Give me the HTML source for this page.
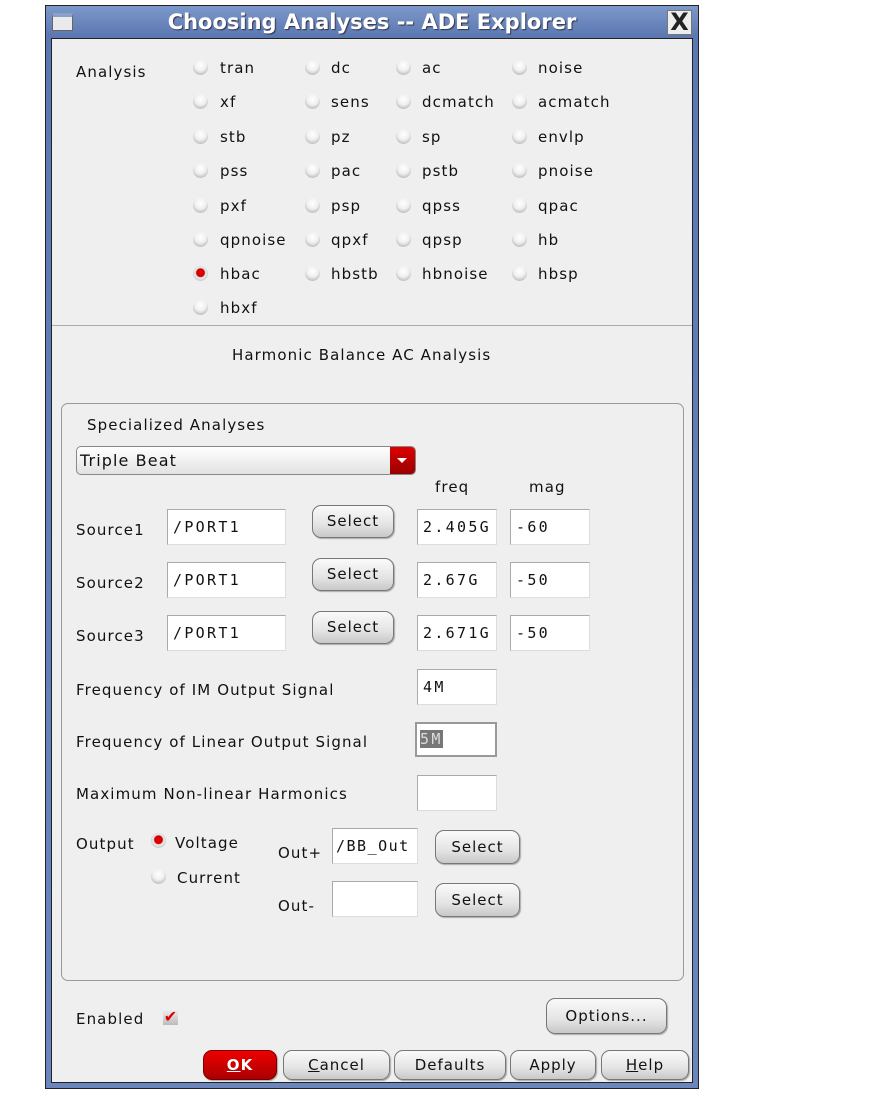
<!DOCTYPE html>
<html><head><meta charset="utf-8"><style>
*{margin:0;padding:0;box-sizing:border-box}
body{width:871px;height:1095px;background:#fff;position:relative;overflow:hidden;font-family:"DejaVu Sans","Liberation Sans",sans-serif;font-size:15px;color:#111}
.a{position:absolute;white-space:nowrap;line-height:18px;letter-spacing:1.1px}
.win{position:absolute;left:45px;top:5px;width:654px;height:1084px;background:linear-gradient(#7d98c9,#5b78b2 30px,#6a86bd);border:1px solid #222}
.title{position:absolute;left:0;top:0;width:652px;height:33px;color:#fff;font-weight:bold;font-size:21px;text-align:center;line-height:32px;text-shadow:1px 1px 1px #334}
.panel{position:absolute;left:51px;top:38px;width:642px;height:1045px;background:#efefef;border:1px solid #222}
.r{position:absolute;width:15px;height:15px;border-radius:50%;background:radial-gradient(circle at 50% 35%,#fff 0,#f0f0f0 45%,#bbb 80%,#999 100%)}
.r.on{background:radial-gradient(circle at 50% 45%,#e00 0,#c00 35%,#eee 45%,#bbb 85%,#999 100%)}
.tb{position:absolute;background:#fff;border:1px solid #aaa;border-right-color:#ddd;border-bottom-color:#ddd;font-family:"DejaVu Sans Mono","Liberation Mono",monospace;font-size:15px;letter-spacing:2.3px;line-height:34px;padding-left:5px;white-space:nowrap;overflow:hidden}
.btn{position:absolute;border:1px solid #777;border-radius:9px;background:linear-gradient(#fafafa,#e4e4e4 60%,#c8c8c8);text-align:center;box-shadow:1px 1px 1px #aaa;letter-spacing:1px}
</style></head><body>
<div class="win">
<div class="title">Choosing Analyses -- ADE Explorer</div>
<div style="position:absolute;left:6px;top:7px;width:21px;height:18px;background:#eaeaea;border:1px solid #666;border-top:4px solid #8aa0c8"></div>
<div style="position:absolute;left:621px;top:4px;width:25px;height:25px;background:#ededed;border:1px solid #777;font:bold 24px 'DejaVu Sans',sans-serif;line-height:23px;text-align:center;color:#222">X</div>
</div>
<div class="panel"></div>

<div class="a" style="left:76px;top:63px">Analysis</div>
<div class="r" style="left:193px;top:60px"></div><div class="a" style="left:220px;top:59px">tran</div>
<div class="r" style="left:305px;top:60px"></div><div class="a" style="left:331px;top:59px">dc</div>
<div class="r" style="left:396px;top:60px"></div><div class="a" style="left:422px;top:59px">ac</div>
<div class="r" style="left:512px;top:60px"></div><div class="a" style="left:538px;top:59px">noise</div>

<div class="r" style="left:193px;top:94px"></div><div class="a" style="left:220px;top:93px">xf</div>
<div class="r" style="left:305px;top:94px"></div><div class="a" style="left:331px;top:93px">sens</div>
<div class="r" style="left:396px;top:94px"></div><div class="a" style="left:422px;top:93px">dcmatch</div>
<div class="r" style="left:512px;top:94px"></div><div class="a" style="left:538px;top:93px">acmatch</div>

<div class="r" style="left:193px;top:129px"></div><div class="a" style="left:220px;top:128px">stb</div>
<div class="r" style="left:305px;top:129px"></div><div class="a" style="left:331px;top:128px">pz</div>
<div class="r" style="left:396px;top:129px"></div><div class="a" style="left:422px;top:128px">sp</div>
<div class="r" style="left:512px;top:129px"></div><div class="a" style="left:538px;top:128px">envlp</div>

<div class="r" style="left:193px;top:163px"></div><div class="a" style="left:220px;top:162px">pss</div>
<div class="r" style="left:305px;top:163px"></div><div class="a" style="left:331px;top:162px">pac</div>
<div class="r" style="left:396px;top:163px"></div><div class="a" style="left:422px;top:162px">pstb</div>
<div class="r" style="left:512px;top:163px"></div><div class="a" style="left:538px;top:162px">pnoise</div>

<div class="r" style="left:193px;top:198px"></div><div class="a" style="left:220px;top:197px">pxf</div>
<div class="r" style="left:305px;top:198px"></div><div class="a" style="left:331px;top:197px">psp</div>
<div class="r" style="left:396px;top:198px"></div><div class="a" style="left:422px;top:197px">qpss</div>
<div class="r" style="left:512px;top:198px"></div><div class="a" style="left:538px;top:197px">qpac</div>

<div class="r" style="left:193px;top:232px"></div><div class="a" style="left:220px;top:231px">qpnoise</div>
<div class="r" style="left:305px;top:232px"></div><div class="a" style="left:331px;top:231px">qpxf</div>
<div class="r" style="left:396px;top:232px"></div><div class="a" style="left:422px;top:231px">qpsp</div>
<div class="r" style="left:512px;top:232px"></div><div class="a" style="left:538px;top:231px">hb</div>

<div class="r on" style="left:193px;top:266px"></div><div class="a" style="left:220px;top:265px">hbac</div>
<div class="r" style="left:305px;top:266px"></div><div class="a" style="left:331px;top:265px">hbstb</div>
<div class="r" style="left:396px;top:266px"></div><div class="a" style="left:422px;top:265px">hbnoise</div>
<div class="r" style="left:512px;top:266px"></div><div class="a" style="left:538px;top:265px">hbsp</div>

<div class="r" style="left:193px;top:300px"></div><div class="a" style="left:220px;top:299px">hbxf</div>

<div style="position:absolute;left:52px;top:325px;width:640px;height:1px;background:#aaa"></div>
<div class="a" style="left:232px;top:346px">Harmonic Balance AC Analysis</div>

<div style="position:absolute;left:61px;top:403px;width:623px;height:578px;border:1px solid #999;border-radius:7px"></div>
<div class="a" style="left:87px;top:416px">Specialized Analyses</div>
<div style="position:absolute;left:76px;top:446px;width:340px;height:29px;border:1px solid #888;border-radius:5px;background:linear-gradient(#fff,#e2e2e2);overflow:hidden">
<div class="a" style="left:3px;top:5px;font-size:16px">Triple Beat</div>
<div style="position:absolute;right:0;top:0;width:25px;height:27px;background:linear-gradient(#d00,#900)"><div style="position:absolute;left:7px;top:11px;border-left:5px solid transparent;border-right:5px solid transparent;border-top:5px solid #fff"></div></div>
</div>
<div class="a" style="left:435px;top:478px">freq</div>
<div class="a" style="left:529px;top:478px">mag</div>

<div class="a" style="left:76px;top:521px">Source1</div>
<div class="tb" style="left:167px;top:509px;width:119px;height:36px">/PORT1</div>
<div class="btn" style="left:312px;top:505px;width:82px;height:33px;line-height:31px">Select</div>
<div class="tb" style="left:417px;top:509px;width:80px;height:36px">2.405G</div>
<div class="tb" style="left:510px;top:509px;width:80px;height:36px">-60</div>

<div class="a" style="left:76px;top:574px">Source2</div>
<div class="tb" style="left:167px;top:562px;width:119px;height:36px">/PORT1</div>
<div class="btn" style="left:312px;top:558px;width:82px;height:33px;line-height:31px">Select</div>
<div class="tb" style="left:417px;top:562px;width:80px;height:36px">2.67G</div>
<div class="tb" style="left:510px;top:562px;width:80px;height:36px">-50</div>

<div class="a" style="left:76px;top:627px">Source3</div>
<div class="tb" style="left:167px;top:615px;width:119px;height:36px">/PORT1</div>
<div class="btn" style="left:312px;top:611px;width:82px;height:33px;line-height:31px">Select</div>
<div class="tb" style="left:417px;top:615px;width:80px;height:36px">2.671G</div>
<div class="tb" style="left:510px;top:615px;width:80px;height:36px">-50</div>

<div class="a" style="left:76px;top:681px">Frequency of IM Output Signal</div>
<div class="tb" style="left:417px;top:669px;width:80px;height:36px">4M</div>
<div class="a" style="left:76px;top:733px">Frequency of Linear Output Signal</div>
<div class="tb" style="left:415px;top:722px;width:82px;height:35px;border:2px solid #999;padding-left:3px;line-height:31px"><span style="background:#777;color:#ddd">5M</span></div>
<div class="a" style="left:76px;top:785px">Maximum Non-linear Harmonics</div>
<div class="tb" style="left:417px;top:775px;width:80px;height:36px"></div>

<div class="a" style="left:76px;top:835px">Output</div>
<div class="r on" style="left:151px;top:833px"></div><div class="a" style="left:175px;top:834px">Voltage</div>
<div class="r" style="left:151px;top:869px"></div><div class="a" style="left:177px;top:869px">Current</div>
<div class="a" style="left:278px;top:844px">Out+</div>
<div class="tb" style="left:332px;top:828px;width:86px;height:36px;padding-left:3px;letter-spacing:1.5px">/BB_Out</div>
<div class="btn" style="left:435px;top:830px;width:85px;height:34px;line-height:32px">Select</div>
<div class="a" style="left:278px;top:897px">Out-</div>
<div class="tb" style="left:332px;top:881px;width:86px;height:36px"></div>
<div class="btn" style="left:435px;top:883px;width:85px;height:34px;line-height:32px">Select</div>

<div class="a" style="left:76px;top:1010px">Enabled</div>
<div style="position:absolute;left:163px;top:1010px;width:15px;height:15px;background:linear-gradient(#eee,#bbb);color:#d00;font-size:16px;line-height:14px;font-weight:bold;text-align:center">✔</div>
<div class="btn" style="left:546px;top:998px;width:121px;height:36px;line-height:34px">Options...</div>

<div class="btn" style="left:203px;top:1050px;width:74px;height:30px;line-height:28px;background:linear-gradient(#e00,#a00);color:#fff;font-weight:bold;border-color:#700"><u>O</u>K</div>
<div class="btn" style="left:283px;top:1050px;width:107px;height:30px;line-height:28px"><u>C</u>ancel</div>
<div class="btn" style="left:394px;top:1050px;width:112px;height:30px;line-height:28px">Defaults</div>
<div class="btn" style="left:510px;top:1050px;width:86px;height:30px;line-height:28px">Apply</div>
<div class="btn" style="left:601px;top:1050px;width:88px;height:30px;line-height:28px"><u>H</u>elp</div>
</body></html>
